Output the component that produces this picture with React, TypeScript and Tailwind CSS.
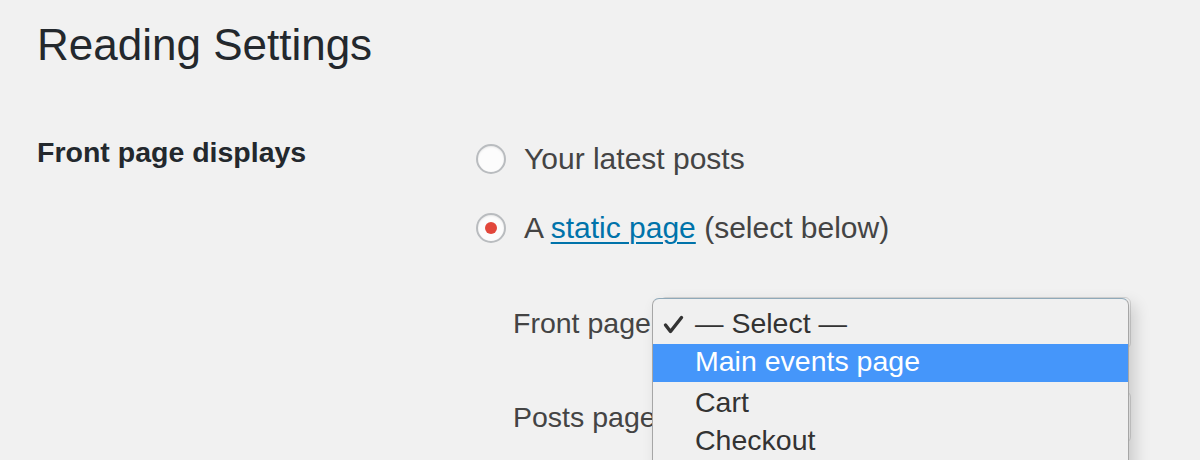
import React from 'react';

const Radio: React.FC<{checked?: boolean}> = ({checked}) => (
  <span className="flex h-[30px] w-[30px] shrink-0 items-center justify-center rounded-full border-2 border-[#b9bcbf] bg-[#fcfcfc] shadow-[inset_0_1px_2px_rgba(0,0,0,0.08)]">
    {checked && <span className="h-[12px] w-[12px] rounded-full bg-[#e2473b]" />}
  </span>
);

const PageRow: React.FC<{label: string; className?: string}> = ({label, className}) => (
  <div className={`flex h-[38px] items-center ${className ?? ''}`}>
    <span className="w-[147px] shrink-0 leading-[34px]">{label}</span>
    <div className="h-[52px] w-[471px] shrink-0 rounded-[6px] border border-[#d4d4d4] bg-[#f7f7f7]" />
  </div>
);

const options = ['Main events page', 'Cart', 'Checkout'];

export default function App() {
  return (
    <div className="relative h-[460px] w-[1200px] overflow-hidden bg-[#f1f1f1] font-['Liberation_Sans',Arial,sans-serif] text-[#444]">
      <div className="pl-[37px]">
        <h1 className="pt-[23px] text-[44px] font-normal leading-[44px] text-[#23282d]">
          Reading Settings
        </h1>
        <div className="mt-[67px] flex">
          <div className="w-[439px] shrink-0 text-[28.5px] font-bold leading-[36px] text-[#23282d]">
            Front page displays
          </div>
          <div className="flex flex-col pt-[5px] text-[30px]">
            <label className="flex h-[40px] items-center gap-[18px]">
              <Radio />
              <span className="leading-[40px]">Your latest posts</span>
            </label>
            <label className="mt-[29px] flex h-[40px] items-center gap-[18px]">
              <Radio checked />
              <span className="leading-[40px]">
                A{' '}
                <a className="text-[#0073aa] underline decoration-[2px] underline-offset-[4px]">
                  static page
                </a>{' '}
                (select below)
              </span>
            </label>
            <div className="ml-[37px] text-[28.5px]">
              <PageRow label="Front page" className="mt-[56px]" />
              <PageRow label="Posts page" className="mt-[56px]" />
            </div>
          </div>
        </div>
      </div>

      {/* open select menu */}
      <div className="absolute left-[652px] top-[298px] h-[200px] w-[477px] rounded-t-[7px] border border-[#a6a6a6] border-t-[#8fa9b9] bg-[#f0f0f0] pt-[7px] text-[28.5px] text-[#333] shadow-[6px_6px_16px_rgba(0,0,0,0.16)]">
        <div className="relative h-[38px] pl-[42px] leading-[35px]">
          <svg
            className="absolute left-[10px] top-[9px]"
            width="21"
            height="19"
            viewBox="0 0 21 19"
            fill="none"
            stroke="#333"
            strokeWidth="3.4"
            strokeLinecap="round"
            strokeLinejoin="round">
            <path d="M2.5 10 L7.5 16.5 L18.5 2.5" />
          </svg>
          — Select —
        </div>
        {options.map((o, i) => (
          <div
            key={o}
            className={
              i === 0
                ? 'h-[38px] bg-[#4596fa] pl-[42px] leading-[35px] text-white'
                : `h-[38px] pl-[42px] leading-[35px] ${i === 1 ? 'mt-[3px]' : ''}`
            }>
            {o}
          </div>
        ))}
      </div>
    </div>
  );
}
